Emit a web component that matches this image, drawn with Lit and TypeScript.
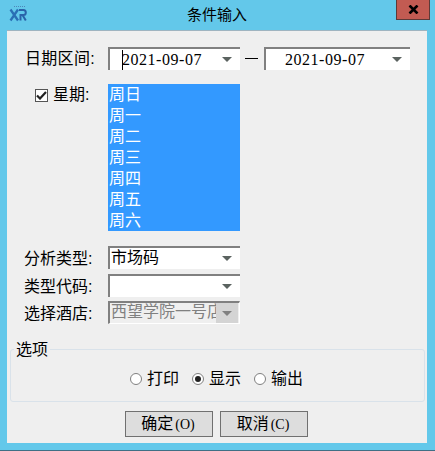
import {css, html, LitElement} from 'lit'
import {customElement} from 'lit/decorators.js'

const days = ['周日', '周一', '周二', '周三', '周四', '周五', '周六']

const arrow = html`<svg class="arrow" width="10" height="5" viewBox="0 0 10 5"><path d="M0 0H10L5 5Z" fill="#5b6360"/></svg>`

@customElement('app-root')
export class AppRoot extends LitElement {

    private combo(text: string, cls = '') {
        return html`<div class="field ${cls}">
            <span class="value">${text}</span>
            <span class="drop">${arrow}</span>
        </div>`
    }

    private radio(text: string, checked = false) {
        return html`<label class="radio">
            <span class="dot ${checked ? 'on' : ''}"></span><span>${text}</span>
        </label>`
    }

    render() {
        return html`
            <div class="window">
                <div class="titlebar">
                    <svg class="logo" width="18" height="17" viewBox="0 0 18 17">
                        <path d="M1.500 4.500L9 15.500M9 4.500L1.500 15.500" fill="none" stroke="#2a6fb5" stroke-width="2.300"/>
                        <path d="M10 5H14.500Q16.800 5 16.800 7.500Q16.800 10 14.500 10H11.500V15.500M13.500 10L16.800 15.500" fill="none" stroke="#2a62a8" stroke-width="2"/>
                        <path d="M5 1.500H16" stroke="#4d87b8" stroke-width="1" stroke-dasharray="1 1"/>
                    </svg>
                    <span class="title">条件输入</span>
                    <button class="close">
                        <svg width="11" height="9" viewBox="0 0 11 9"><path d="M1.500 .5L9.500 8.500M9.500 .5L1.500 8.500" stroke="#000" stroke-width="2.600"/></svg>
                    </button>
                </div>
                <div class="client">
                    <div class="row dates">
                        <span class="label wide">日期区间:</span>
                        <div class="field date first">
                            <span class="caret"></span>
                            <span class="digits">2021-09-07</span>
                            <span class="drop">${arrow}</span>
                        </div>
                        <span class="dash"></span>
                        <div class="field date second">
                            <span class="digits">2021-09-07</span>
                            <span class="drop">${arrow}</span>
                        </div>
                    </div>
                    <div class="row week">
                        <div class="check-label">
                            <span class="check">
                                <svg width="11" height="9" viewBox="0 0 11 9"><path d="M1 4.500L4 7.500L10 1" fill="none" stroke="#222" stroke-width="2.200"/></svg>
                            </span>
                            <span>星期:</span>
                        </div>
                        <div class="list">
                            ${days.map(d => html`<div class="item">${d}</div>`)}
                        </div>
                    </div>
                    <div class="combos">
                        <div class="row"><span class="label">分析类型:</span>${this.combo('市场码')}</div>
                        <div class="row"><span class="label">类型代码:</span>${this.combo('')}</div>
                        <div class="row"><span class="label">选择酒店:</span>${this.combo('西望学院一号店', 'disabled')}</div>
                    </div>
                    <div class="group">
                        <span class="legend">选项</span>
                        ${this.radio('打印')}
                        ${this.radio('显示', true)}
                        ${this.radio('输出')}
                    </div>
                    <div class="buttons">
                        <button class="btn">确定<span class="key">(O)</span></button>
                        <button class="btn">取消<span class="key">(C)</span></button>
                    </div>
                </div>
            </div>
        `
    }

    static styles = css`
      :host {
        display: block;
        width: 435px;
        height: 451px;
        font-family: 'Liberation Sans', 'Noto Sans CJK SC', sans-serif;
        font-size: 16px;
        color: #000;
      }

      .window {
        box-sizing: border-box;
        width: 435px;
        height: 451px;
        display: flex;
        flex-direction: column;
        background: #63c8ea;
        padding: 0 8px 7px 7px;
        border-bottom: 1px solid #3f6f85;
      }

      .titlebar {
        height: 30px;
        flex: none;
        position: relative;
        display: flex;
        justify-content: center;
        align-items: center;
      }

      .logo {
        position: absolute;
        left: 2px;
        top: 5px;
      }

      .title {
        font-size: 15px;
        line-height: 16px;
        margin: 0 0 1px 0;
      }

      .close {
        position: absolute;
        right: -3px;
        top: -1px;
        width: 34px;
        height: 21px;
        padding: 0;
        border: 1px solid #5c3a38;
        background: #c25b52;
        display: flex;
        align-items: center;
        justify-content: center;
      }

      .client {
        flex: 1;
        background: #efefef;
        border-top: 1px solid #9fb4c0;
        box-sizing: border-box;
        padding: 16px 0 0 0;
        display: flex;
        flex-direction: column;
      }

      .row {
        display: flex;
        align-items: center;
      }

      .label {
        width: 101px;
        flex: none;
        box-sizing: border-box;
        padding-left: 17px;
        line-height: 20px;
        white-space: nowrap;
      }

      .combos .label {
        padding-top: 2px;
      }

      .label.wide {
        padding-left: 18px;
        letter-spacing: .3px;
      }

      .field {
        box-sizing: border-box;
        width: 132px;
        height: 23px;
        flex: none;
        background: #fff;
        border-top: 2px solid #808080;
        border-left: 2px solid #808080;
        display: flex;
        align-items: center;
        position: relative;
      }

      .value {
        flex: 1;
        min-width: 0;
        padding-left: 1px;
        line-height: 18px;
        margin-top: -2px;
        white-space: nowrap;
      }

      .disabled .value {
        overflow: hidden;
      }

      .drop {
        width: 20px;
        flex: none;
        height: 100%;
        display: flex;
        align-items: center;
        justify-content: center;
        margin-right: 3px;
      }

      .digits {
        flex: 1;
        font-family: 'Liberation Serif', serif;
        letter-spacing: .53px;
        white-space: nowrap;
        line-height: 18px;
      }

      .date.first {
        padding-left: 12px;
      }

      .date.second {
        width: 146px;
        padding-left: 19px;
      }

      .caret {
        position: absolute;
        left: 12px;
        top: 1px;
        width: 1px;
        height: 20px;
        background: #000;
      }

      .dash {
        width: 13px;
        height: 1px;
        background: #000;
        margin: 0 6px 0 5px;
      }

      .week {
        margin-top: 14px;
        align-items: flex-start;
      }

      .check-label {
        width: 101px;
        flex: none;
        box-sizing: border-box;
        padding: 0 0 0 28px;
        margin-top: 4px;
        display: flex;
        align-items: center;
        gap: 5px;
        line-height: 14px;
      }

      .check {
        box-sizing: border-box;
        width: 13px;
        height: 13px;
        border: 1px solid #555;
        background: #fff;
        display: flex;
        align-items: center;
        justify-content: center;
      }

      .list {
        width: 132px;
        height: 147px;
        flex: none;
        background: #3399ff;
        color: #fff;
        padding: 1px 0 0 1px;
        box-sizing: border-box;
      }

      .item {
        height: 21px;
        line-height: 19px;
      }

      .combos {
        margin-top: 15px;
        display: flex;
        flex-direction: column;
        gap: 5px;
      }

      .combos .row:last-child {
        margin-top: -1px;
      }

      .disabled {
        background: #efefef;
        border-right: 1px solid #fff;
        border-bottom: 1px solid #fff;
        color: #808080;
      }

      .disabled .drop {
        background: #d4d4d4;
        width: 22px;
        margin-right: 1px;
        height: 20px;
      }

      .disabled .arrow path {
        fill: #808080;
      }

      .group {
        position: relative;
        box-sizing: border-box;
        margin: 25px 2px 0 3px;
        height: 53px;
        border: 1px solid #d9e2ea;
        border-radius: 3px;
        display: flex;
        justify-content: center;
        align-items: center;
        gap: 13px;
        padding: 7px 2px 0 0;
      }

      .legend {
        position: absolute;
        left: 3px;
        top: -8px;
        padding: 0 2px;
        line-height: 16px;
        background: #efefef;
      }

      .radio {
        display: flex;
        align-items: center;
        gap: 5px;
        line-height: 20px;
      }

      .dot {
        box-sizing: border-box;
        width: 12px;
        height: 12px;
        border: 1px solid #808080;
        border-radius: 50%;
        background: #fff;
        display: flex;
        align-items: center;
        justify-content: center;
      }

      .dot.on::after {
        content: '';
        width: 6px;
        height: 6px;
        border-radius: 50%;
        background: #222;
      }

      .buttons {
        margin-top: 9px;
        display: flex;
        gap: 7px;
        padding-left: 118px;
      }

      .btn {
        box-sizing: border-box;
        width: 88px;
        height: 26px;
        padding: 0 2px 0 0;
        background: #dddddd;
        border: 1px solid #707070;
        font: inherit;
        color: #000;
        line-height: 22px;
        white-space: pre;
      }

      .key {
        font-family: 'Liberation Serif', serif;
        font-size: 14px;
        margin-left: 2px;
      }
    `
}

declare global {
    interface HTMLElementTagNameMap {
        'app-root': AppRoot
    }
}
